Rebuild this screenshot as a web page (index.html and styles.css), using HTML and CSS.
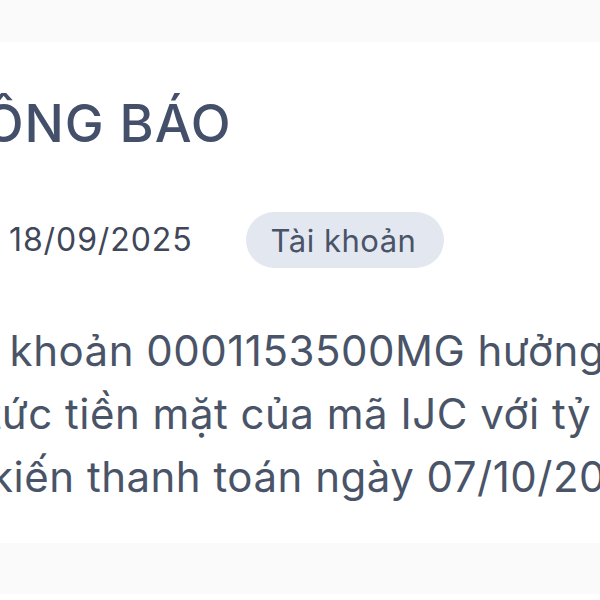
FILE: index.html
```html
<!DOCTYPE html>
<html lang="vi">
<head>
<meta charset="utf-8">
<title>Thông báo</title>
<link rel="stylesheet" href="styles.css">
</head>
<body>
<div class="page">
  <div class="band band-top"></div>
  <article class="card">
    <h1 class="title">THÔNG BÁO</h1>
    <div class="meta">
      <svg class="meta-icon" viewBox="0 0 24 24" width="36" height="36" aria-hidden="true"><circle cx="12" cy="12" r="9" fill="none" stroke="#64748b" stroke-width="2"/><path d="M12 7v5l3 2" fill="none" stroke="#64748b" stroke-width="2" stroke-linecap="round"/></svg>
      <span class="date">18/09/2025</span>
      <span class="badge">Tài khoản</span>
    </div>
    <p class="body">Tài khoản 0001153500MG hưởng<br>cổ tức tiền mặt của mã IJC với tỷ lệ 8%,<br>dự kiến thanh toán ngày 07/10/2025.</p>
  </article>
  <div class="band band-bottom"></div>
</div>
</body>
</html>
```
FILE: styles.css
```css
html, body {
  margin: 0;
  padding: 0;
  background: #ffffff;
  overflow: hidden;
}
body {
  font-family: "Inter", "Noto Sans", sans-serif;
  width: 600px;
  height: 600px;
}
.page {
  display: flex;
  flex-direction: column;
}
.band {
  background: #fafafa;
}
.band-top {
  height: 42px;
}
.band-bottom {
  height: 51px;
}
.card {
  background: #ffffff;
  margin-left: -100px;
  width: 900px;
  padding: 51px 40px 38px;
  box-sizing: border-box;
  height: 501px;
}
.title {
  margin: 0 0 0 -31px;
  font-size: 52px;
  line-height: 1.2;
  font-weight: 500;
  color: #44506a;
  letter-spacing: 1px;
}
.meta {
  display: flex;
  align-items: center;
  margin-top: 57px;
  height: 56px;
}
.meta-icon {
  margin-right: 33px;
  flex: none;
}
.date {
  font-size: 32px;
  line-height: 1.2;
  color: #3f4759;
  letter-spacing: 0.9px;
}
.badge {
  margin-left: 53px;
  height: 56px;
  box-sizing: border-box;
  padding: 0 28px 0 25px;
  display: inline-flex;
  align-items: center;
  border-radius: 28px;
  background: #e3e8f0;
  font-size: 31px;
  letter-spacing: 0.5px;
  color: #4a5468;
}
.body {
  margin: 51px 0 0 -15px;
  text-indent: 13px;
  font-size: 42px;
  line-height: 63px;
  letter-spacing: 0.5px;
  color: #4a5468;
  white-space: nowrap;
}
```
